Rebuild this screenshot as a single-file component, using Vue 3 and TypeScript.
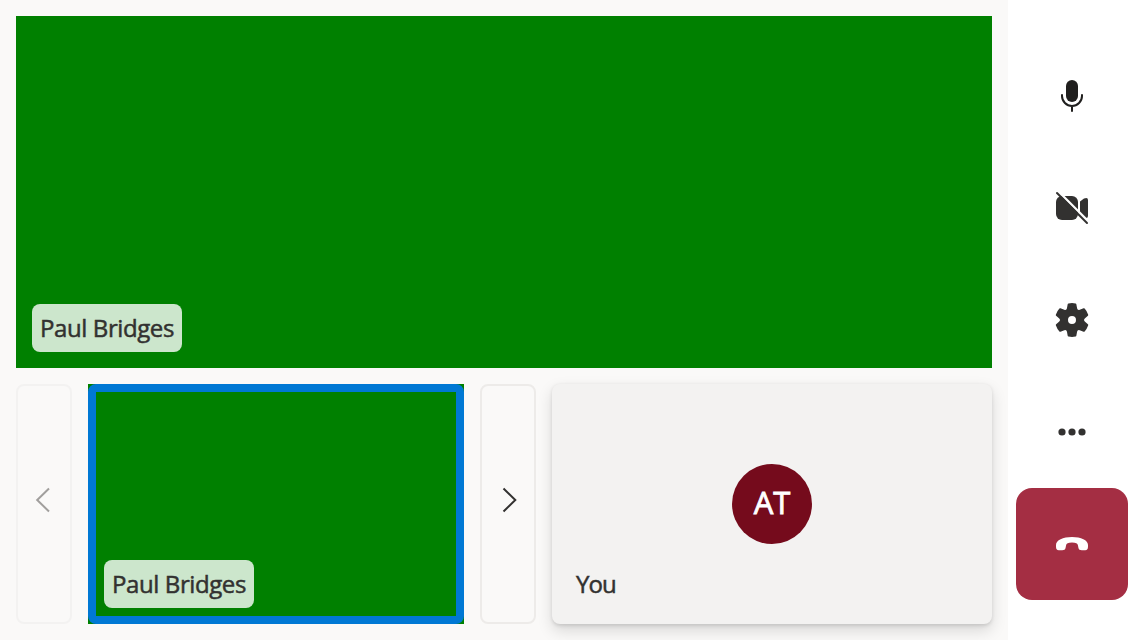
<script setup lang="ts">
const speaker: string = 'Paul Bridges'
const self = { name: 'You', initials: 'AT' }
</script>

<template>
  <div class="call">
    <main class="stage">
      <section class="video main-video">
        <span class="name-tag">{{ speaker }}</span>
      </section>
      <div class="strip">
        <button class="pager disabled" aria-label="Previous">
          <svg width="56" height="48" viewBox="0 0 56 48"><path d="M33 12.500 21.200 24 33 35.500" /></svg>
        </button>
        <section class="video speaking">
          <span class="name-tag">{{ speaker }}</span>
        </section>
        <button class="pager next" aria-label="Next">
          <svg width="56" height="48" viewBox="0 0 56 48"><path d="M23.500 12.500 35.300 24 23.500 35.500" /></svg>
        </button>
        <section class="self">
          <div class="avatar"><span>{{ self.initials }}</span></div>
          <span class="self-name">{{ self.name }}</span>
        </section>
      </div>
    </main>
    <aside class="controls">
      <button class="control" aria-label="Microphone">
        <svg class="mic" width="40" height="40" viewBox="0 0 40 40">
          <rect x="14" y="4" width="12" height="22" rx="6" />
          <path class="line" d="M10 19v1a10 10 0 0 0 20 0v-1M20 30v5" />
        </svg>
      </button>
      <button class="control" aria-label="Camera off">
        <svg width="40" height="40" viewBox="0 0 40 40">
          <path d="M10 8h10a6 6 0 0 1 6 6v12a6 6 0 0 1-6 6H10a6 6 0 0 1-6-6V14a6 6 0 0 1 6-6Z" />
          <path d="M28 13.500 32 10.600q4-1.600 4 1.400v16q0 3-4 1.400l-4-2.900Z" />
          <path class="gap" d="M6.500 3.500 37.500 34.500" />
          <path class="line slash" d="M5 5 35 35" />
        </svg>
      </button>
      <button class="control" aria-label="Settings">
        <svg width="40" height="40" viewBox="0 0 20 20">
          <path d="M1.91 7.38A8.5 8.5 0 0 1 3.7 4.3a.5.5 0 0 1 .54-.13l1.92.68a1 1 0 0 0 1.32-.76l.36-2a.5.5 0 0 1 .4-.4 8.53 8.53 0 0 1 3.55 0c.2.04.35.2.38.4l.37 2a1 1 0 0 0 1.32.76l1.92-.68a.5.5 0 0 1 .54.13 8.5 8.5 0 0 1 1.78 3.08c.06.2 0 .4-.15.54l-1.56 1.32a1 1 0 0 0 0 1.52l1.56 1.32a.5.5 0 0 1 .15.54 8.5 8.5 0 0 1-1.78 3.08.5.5 0 0 1-.54.13l-1.92-.68a1 1 0 0 0-1.32.76l-.37 2a.5.5 0 0 1-.38.4 8.53 8.53 0 0 1-3.56 0 .5.5 0 0 1-.39-.4l-.36-2a1 1 0 0 0-1.32-.76l-1.92.68a.5.5 0 0 1-.54-.13 8.5 8.5 0 0 1-1.78-3.08.5.5 0 0 1 .15-.54l1.56-1.32a1 1 0 0 0 0-1.52L2.06 7.92a.5.5 0 0 1-.15-.54ZM8 10a2 2 0 1 0 4 0 2 2 0 0 0-4 0Z" />
        </svg>
      </button>
      <button class="control" aria-label="More options">
        <svg width="40" height="40" viewBox="0 0 40 40">
          <circle cx="10" cy="20" r="3.6" /><circle cx="20" cy="20" r="3.6" /><circle cx="30" cy="20" r="3.6" />
        </svg>
      </button>
      <button class="control leave" aria-label="Leave call">
        <svg width="40" height="40" viewBox="0 0 40 40">
          <path d="M20 13C29 13 36 16 36 21V22.500C36 25 35.200 26.200 33.200 26.200H29.800C27.800 26.200 26.800 25.600 26.400 23.800L25.900 21.200C25.600 19.400 24 18.600 20 18.600S14.400 19.400 14.100 21.200L13.600 23.800C13.200 25.600 12.200 26.200 10.200 26.200H6.800C4.800 26.200 4 25 4 22.500V21C4 16 11 13 20 13Z" />
        </svg>
      </button>
    </aside>
  </div>
</template>

<style>
body { margin: 0; }
</style>

<style scoped>
.call {
  display: flex;
  width: 1136px;
  height: 640px;
  overflow: hidden;
  background: #faf9f8;
  color: #323130;
  font-family: "Segoe UI", "Open Sans", "Noto Sans", sans-serif;
  font-size: 24px;
  font-weight: 500;
  -webkit-text-stroke: .5px currentColor;
}
button { font: inherit; padding: 0; cursor: pointer; }
svg { display: block; fill: #323130; }
.stage {
  box-sizing: border-box;
  width: 1008px;
  padding: 16px;
  display: flex;
  flex-direction: column;
  gap: 16px;
}
.video {
  box-sizing: border-box;
  display: flex;
  align-items: flex-end;
  padding: 16px;
  background: #008000;
}
.main-video { height: 352px; }
.name-tag {
  box-sizing: border-box;
  width: 150px;
  height: 48px;
  line-height: 47px;
  padding-left: 8px;
  border-radius: 8px;
  background: rgba(255, 255, 255, .8);
  letter-spacing: -.4px;
  white-space: nowrap;
}
.strip { display: flex; gap: 16px; height: 240px; }
.pager {
  box-sizing: border-box;
  width: 56px;
  height: 240px;
  display: flex;
  align-items: center;
  justify-content: center;
  border: 2px solid #edebe9;
  border-radius: 8px;
  background: transparent;
}
.pager svg { flex: none; margin-top: -8px; }
.pager path { fill: none; stroke: #323130; stroke-width: 2; }
.disabled { border-color: #f3f2f1; }
.disabled path { stroke: #a19f9d; }
.speaking {
  position: relative;
  width: 376px;
}
.speaking::after {
  content: "";
  position: absolute;
  inset: 0;
  border: 8px solid #0078d4;
  border-radius: 8px;
}
.self {
  box-sizing: border-box;
  width: 440px;
  display: flex;
  flex-direction: column;
  padding: 80px 24px 16px;
  border-radius: 8px;
  background: #f3f2f1;
  box-shadow: 0 6.4px 14.4px rgba(0, 0, 0, .132), 0 1.2px 3.6px rgba(0, 0, 0, .108);
}
.avatar {
  align-self: center;
  width: 80px;
  height: 80px;
  line-height: 76px;
  border-radius: 50%;
  background: #750b1c;
  color: #fff;
  font-size: 31px;
  text-align: center;
  -webkit-text-stroke: .8px currentColor;
}
.self-name { margin-top: 16px; line-height: 47px; letter-spacing: -.9px; }
.controls {
  box-sizing: border-box;
  width: 128px;
  padding: 40px 8px;
  background: #fff;
}
.control {
  width: 112px;
  height: 112px;
  display: flex;
  align-items: center;
  justify-content: center;
  border: 0;
  background: transparent;
}
.mic { fill: #201f1e; }
.line { fill: none; stroke: #323130; stroke-width: 2; stroke-linecap: round; }
.mic .line { stroke: #201f1e; }
.gap { fill: none; stroke: #fff; stroke-width: 2.4; }
.leave { border-radius: 16px; background: #a42e43; }
.leave svg { fill: #fff; }
</style>
